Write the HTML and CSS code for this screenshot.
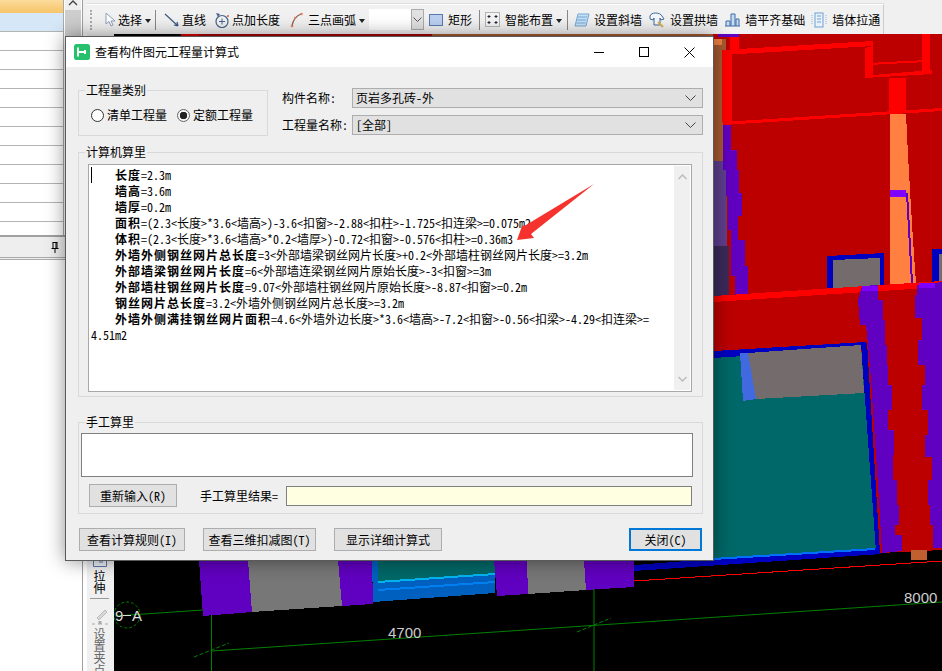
FILE: index.html
```html
<!DOCTYPE html>
<html lang="zh">
<head>
<meta charset="utf-8">
<title>查看构件图元工程量计算式</title>
<link rel="stylesheet" href="styles.css">
</head>
<body>
<div class="app">
  <aside class="left">
    <div class="left-top">
      <div class="table">
        <div class="thead"></div>
        <div class="row row-sel"></div>
        <div class="row"></div><div class="row"></div><div class="row"></div><div class="row"></div>
        <div class="row"></div><div class="row"></div><div class="row"></div><div class="row"></div>
        <div class="row"></div><div class="row"></div>
      </div>
      <div class="vscroll"><svg class="vscroll-up" width="10" height="6" viewBox="0 0 10 6"><path d="M1 5l4-4 4 4" fill="none" stroke="#444" stroke-width="1.4"/></svg><div class="vscroll-thumb"></div></div>
    </div>
    <div class="panel-band">
      <svg class="pin" width="8" height="11" viewBox="0 0 8 11"><path d="M1.500.5h5M2 .5v6h4v-6M.5 6.500h7M4 6.500V11M5 1v5" fill="none" stroke="#000"/></svg>
    </div>
  </aside>

  <div class="main">
    <header class="topbar">
      <div class="toolbar">
        <span class="grip"></span>
        <svg class="ic ic-cur" width="12" height="16" viewBox="0 0 12 16"><path d="M2 1v11l3-2.500 2 4.500 2-1-2-4h4z" fill="#fff" stroke="#8fa0b8"/></svg>
        <span class="tb-text">选择</span><i class="caret"></i><span class="sep"></span>
        <svg class="ic ic-line" width="16" height="16" viewBox="0 0 16 16"><path d="M1 2l13 12M14 14l-1-4M14 14l-4-1" fill="none" stroke="#3c5a82" stroke-width="1.200"/></svg>
        <span class="tb-text">直线</span>
        <svg class="ic ic-line" width="16" height="16" viewBox="0 0 16 16"><circle cx="8" cy="9.500" r="6" fill="none" stroke="#47648c" stroke-width="1.200"/><path d="M5 9.500h6M8 6.500v6" stroke="#47648c"/><path d="M2 1l4 1-2 3z" fill="#47648c"/><circle cx="14" cy="4" r="1" fill="#d06040"/></svg>
        <span class="tb-text">点加长度</span>
        <svg class="ic ic-arc" width="14" height="16" viewBox="0 0 14 16"><path d="M2 14C3 8 6 4 11 2" fill="none" stroke="#8a5a4a" stroke-width="1.300"/><circle cx="2" cy="14" r="1.300" fill="#e08060"/><circle cx="11.500" cy="2" r="1.300" fill="#e08060"/><circle cx="5" cy="6" r="1.200" fill="#e08060"/></svg>
        <span class="tb-text">三点画弧</span><i class="caret"></i>
        <span class="combo"><span class="combo-btn"><svg width="9" height="5" viewBox="0 0 9 5"><path d="M.5.500l4 4 4-4" fill="none" stroke="#555"/></svg></span></span>
        <svg class="ic ic-rect" width="14" height="12" viewBox="0 0 14 12"><rect x=".5" y=".5" width="13" height="11" fill="#bcd0f0" stroke="#5a7ab0"/></svg>
        <span class="tb-text">矩形</span><span class="sep sep-wide"></span>
        <svg class="ic ic-rect" width="15" height="15" viewBox="0 0 15 15"><rect x=".5" y=".5" width="14" height="14" fill="#f4f4f4" stroke="#777" stroke-dasharray="1 1"/><path d="M4 3v3M2.500 4.500h3M11 3v3M9.500 4.500h3M4 9v3M2.500 10.500h3M11 9v3M9.500 10.500h3" stroke="#223"/></svg>
        <span class="tb-text">智能布置</span><i class="caret"></i><span class="sep sep-mid"></span>
        <svg class="ic ic-slant" width="16" height="14" viewBox="0 0 16 14"><path d="M4 1h11l-3 12H1z" fill="#c8e0f4" stroke="#70a8d8"/><path d="M4 4h9M3 7h9M2.500 10h9" stroke="#70a8d8"/></svg>
        <span class="tb-text">设置斜墙</span>
        <svg class="ic ic-arch" width="16" height="17" viewBox="0 0 16 17"><path d="M1 5C2 1 11 1 13 5l2 3-3 1-1-2v7H5V7L4 9 1 8z" fill="#f4f8fc" stroke="#3a6a9a"/><path d="M9 11l5 5" stroke="#d8b050" stroke-width="2"/></svg>
        <span class="tb-text">设置拱墙</span>
        <svg class="ic ic-base" width="16" height="15" viewBox="0 0 16 15"><path d="M1 14h15M2 14V9h4v5M7 14V2h4v12M12 14V7h3v7" fill="#c8dcf0" stroke="#3a6aa8"/></svg>
        <span class="tb-text">墙平齐基础</span>
        <svg class="ic ic-pull" width="17" height="16" viewBox="0 0 17 16"><path d="M1 3v10M15 3v10" stroke="#8ab8e0" stroke-dasharray="1 1"/><rect x="4" y="1" width="8" height="14" fill="#e8f2fa" stroke="#70a0d0"/><path d="M6 4h4M6 7h4M6 10h4" stroke="#70a0d0"/></svg>
        <span class="tb-text">墙体拉通</span>
      </div>
    </header>

    <div class="work">
      <nav class="strip">
        <div class="strip-spacer"></div>
        <svg class="strip-ic" width="14" height="8" viewBox="0 0 14 8"><path d="M.5 0v7.500h13V0" fill="#eef2f8" stroke="#5a7ab0"/><path d="M7 1v3M9 2v2" stroke="#5a7ab0"/></svg>
        <span class="strip-text">拉伸</span>
        <span class="strip-sep"></span>
        <svg class="strip-ic" width="16" height="18" viewBox="0 0 16 18"><path d="M5 11l8-8 2 2-8 8z" fill="#d8d8d8" stroke="#bbb"/><path d="M0 17h3M6 17h4M13 17h3" stroke="#aaa"/><rect x="6.500" y="14" width="3" height="3" fill="#aaa"/></svg>
        <span class="strip-text strip-dim">设置夹点</span>
      </nav>
      <div class="canvas">
        <svg class="scene" width="828" height="637" viewBox="114 34 828 637" shape-rendering="crispEdges">
          <rect x="114" y="34" width="828" height="637" fill="#000"/>
          <rect x="181" y="34" width="18" height="3" fill="#e00000"/>
          <rect x="199" y="34" width="233" height="3" fill="#a80000"/>
          <rect x="432" y="34" width="290" height="3" fill="#a85a30"/>
          <polygon points="713,34 942,34 942,300 713,300" fill="#bc0000"/>
          <rect x="713" y="39" width="13" height="122" fill="#a85a30"/>
          <rect x="713" y="39" width="9" height="6" fill="#f08040"/>
          <rect x="718" y="34" width="21" height="3" fill="#6000c0"/>
          <rect x="713" y="161" width="14" height="85" fill="#5f3f8f"/>
          <rect x="713" y="246" width="16" height="52" fill="#3c2a5a"/>
          <polygon points="723,124 731,124 731,150 737,150 737,170 739,170 739,193 742,193 742,216 738,216 738,240 745,240 745,266 748,266 748,295 735,297 735,276 731,276 731,230 728,230 728,196 726,196 726,170 723,170" fill="#6000c0"/>
          <rect x="723" y="119" width="8" height="3" fill="#8000ff"/>
          <rect x="722" y="50" width="10" height="72" fill="#f00"/>
          <rect x="730" y="37" width="9" height="13" fill="#f00"/>
          <polygon points="722,50 873,41 873,46 722,55" fill="#f00"/>
          <polygon points="865,48 873,46 873,75 932,70 932,74 865,78" fill="#f00"/>
          <polygon points="868,63 927,60 927,62 868,65" fill="#f00"/>
          <rect x="922" y="34" width="8" height="40" fill="#f00"/>
          <polygon points="723,122 942,108 942,111 723,125" fill="#f00"/>
          <polygon points="889,78 906,78 906,113 889,113" fill="#f00"/>
          <polygon points="890,114 906,114 908,155 910,190 913,240 916,283 890,286" fill="#ff8040"/>
          <rect x="890" y="190" width="16" height="7" fill="#8000ff"/>
          <polygon points="906,193 908,193 913,283 911,283" fill="#6000c0"/>
          <polygon points="827,256 884,253 884,287 827,290" fill="#0000c0"/>
          <polygon points="833,260 880,258 880,288 833,290" fill="#746c6c"/>
          <polygon points="932,249 942,249 942,282 932,282" fill="#0000c0"/>
          <rect x="939" y="254" width="3" height="28" fill="#746c6c"/>
          <polygon points="713,302 942,286 942,360 713,360" fill="#bc0000"/>
          <polygon points="713,296 942,281 942,287 713,302" fill="#f00"/>
          <polygon points="713,354 861,345 876,549 713,560" fill="#006868"/>
          <polygon points="713,351 866,342 868,348 713,358" fill="#0000c0"/>
          <polygon points="861,343 867,343 882,549 876,552" fill="#0000c0"/>
          <polygon points="748,353 861,345 864,393 756,399" fill="#746c6c"/>
          <polygon points="740,353 748,353 756,399 743,401" fill="#4169e0"/>
          <polygon points="634,565 713,559 877,548 881,549 881,554 634,571" fill="#0000c0"/>
          <polygon points="713,558 875,548 875,550 713,560" fill="#0070ff"/>
          <polygon points="867,342 920,340 942,340 942,550 880,553" fill="#bc0000"/>
          <polygon points="858,300 862,286 878,285 878,300 883,300 883,320 885,320 885,345 887,345 887,365 888,365 888,385 892,385 892,410 888,410 888,430 894,430 894,455 893,455 893,480 897,480 897,505 899,505 899,525 895,525 895,535 902,535 902,551 882,553 879,500 875,440 871,380 868,345 866,325 860,325" fill="#6000c0"/>
          <rect x="862" y="286" width="16" height="5" fill="#8000ff"/>
          <polygon points="917,285 942,282 942,548 933,548 933,525 930,525 930,505 928,505 928,480 932,480 932,457 925,457 925,435 928,435 928,410 922,410 922,385 925,385 925,365 918,365 918,340 922,340 922,318 915,318 915,295 917,295" fill="#6000c0"/>
          <rect x="919" y="283" width="16" height="5" fill="#8000ff"/>
          <rect x="911" y="550" width="16" height="10" fill="#c06030"/>
          <polygon points="378,560 495,560 495,575 378,583" fill="#006868"/>
          <polygon points="372,560 378,560 378,582 495,574 495,593 373,602" fill="#0060c0"/>
          <polygon points="378,581 495,573 495,575 378,583" fill="#00b4f0"/>
          <polygon points="378,589 495,581 495,583 378,591" fill="#0080f0"/>
          <polygon points="199,560 248,560 252,612 203,616" fill="#6000c0"/>
          <polygon points="248,560 338,560 342,606 252,612" fill="#777"/>
          <polygon points="338,560 372,560 373,604 342,606" fill="#6000c0"/>
          <polygon points="494,560 527,560 528,594 497,596" fill="#6000c0"/>
          <polygon points="527,560 584,560 586,590 528,594" fill="#777"/>
          <polygon points="584,560 634,560 634,587 586,590" fill="#6000c0"/>
          <polygon points="634,571 634,565 640,566" fill="#0000c0"/>
          <line x1="634" y1="581" x2="942" y2="561" stroke="#f00"/>
          <g shape-rendering="auto" stroke="#008000" fill="none">
            <line x1="212" y1="651" x2="942" y2="602"/>
            <line x1="115" y1="616" x2="203" y2="610"/>
            <line x1="211.500" y1="615" x2="211.500" y2="671"/>
            <line x1="594" y1="589" x2="594" y2="671"/>
            <line x1="194" y1="657" x2="229" y2="643" stroke-dasharray="4 2"/>
            <line x1="577" y1="632" x2="611" y2="618" stroke-dasharray="4 2"/>
            <circle cx="127" cy="615" r="13" stroke-dasharray="3 2"/>
          </g>
          <text class="cad-text" x="115" y="621">9</text>
          <line x1="123" y1="615" x2="131" y2="615" stroke="#ddd"/>
          <text class="cad-text" x="132" y="621">A</text>
          <text class="cad-dim" x="388" y="638">4700</text>
          <text class="cad-dim" x="904" y="603">8000</text>
        </svg>
      </div>
    </div>
  </div>

  <section class="dialog">
    <div class="titlebar">
      <svg class="app-ic" width="16" height="16" viewBox="0 0 16 16"><rect width="16" height="16" rx="2.500" fill="#27c06c"/><path d="M4 3.500v9M4 8h8M11 6v4" fill="none" stroke="#fff" stroke-width="1.800"/></svg>
      <span class="title">查看构件图元工程量计算式</span>
      <div class="win-btns">
        <svg width="10" height="10" viewBox="0 0 10 10"><path d="M0 5.500h10" stroke="#000"/></svg>
        <svg width="10" height="10" viewBox="0 0 10 10"><rect x=".5" y=".5" width="9" height="9" fill="none" stroke="#000"/></svg>
        <svg width="11" height="11" viewBox="0 0 11 11"><path d="M.5.500l10 10M10.500.500l-10 10" stroke="#000"/></svg>
      </div>
    </div>
    <div class="dlg-body">
      <div class="top-row">
        <fieldset class="group group-type">
          <legend>工程量类别</legend>
          <label class="radio"><i class="radio-dot"></i>清单工程量</label>
          <label class="radio radio-on"><i class="radio-dot"></i>定额工程量</label>
        </fieldset>
        <div class="fields">
          <div class="field"><span class="field-label">构件名称:</span><div class="select">页岩多孔砖-外<svg class="chev" width="11" height="6" viewBox="0 0 11 6"><path d="M.5.500l5 5 5-5" fill="none" stroke="#444"/></svg></div></div>
          <div class="field"><span class="field-label">工程量名称:</span><div class="select">[全部]<svg class="chev" width="11" height="6" viewBox="0 0 11 6"><path d="M.5.500l5 5 5-5" fill="none" stroke="#444"/></svg></div></div>
        </div>
      </div>

      <fieldset class="group group-calc">
        <legend>计算机算里</legend>
        <div class="calc-box">
          <div class="calc-text">
            <i class="text-caret"></i>
            <p class="ln"><b>长度</b>=2.3m</p>
            <p class="ln"><b>墙高</b>=3.6m</p>
            <p class="ln"><b>墙厚</b>=0.2m</p>
            <p class="ln"><b>面积</b>=(2.3&lt;长度&gt;*3.6&lt;墙高&gt;)-3.6&lt;扣窗&gt;-2.88&lt;扣柱&gt;-1.725&lt;扣连梁&gt;=0.075m2</p>
            <p class="ln"><b>体积</b>=(2.3&lt;长度&gt;*3.6&lt;墙高&gt;*0.2&lt;墙厚&gt;)-0.72&lt;扣窗&gt;-0.576&lt;扣柱&gt;=0.36m3</p>
            <p class="ln"><b>外墙外侧钢丝网片总长度</b>=3&lt;外部墙梁钢丝网片长度&gt;+0.2&lt;外部墙柱钢丝网片长度&gt;=3.2m</p>
            <p class="ln"><b>外部墙梁钢丝网片长度</b>=6&lt;外部墙连梁钢丝网片原始长度&gt;-3&lt;扣窗&gt;=3m</p>
            <p class="ln"><b>外部墙柱钢丝网片长度</b>=9.07&lt;外部墙柱钢丝网片原始长度&gt;-8.87&lt;扣窗&gt;=0.2m</p>
            <p class="ln"><b>钢丝网片总长度</b>=3.2&lt;外墙外侧钢丝网片总长度&gt;=3.2m</p>
            <p class="ln"><b>外墙外侧满挂钢丝网片面积</b>=4.6&lt;外墙外边长度&gt;*3.6&lt;墙高&gt;-7.2&lt;扣窗&gt;-0.56&lt;扣梁&gt;-4.29&lt;扣连梁&gt;=<br>4.51m2</p>
          </div>
          <div class="calc-scroll">
            <svg width="9" height="6" viewBox="0 0 9 6"><path d="M.5 5l4-4 4 4" fill="none" stroke="#bbb" stroke-width="1.400"/></svg>
            <svg width="9" height="6" viewBox="0 0 9 6"><path d="M.5 1l4 4 4-4" fill="none" stroke="#bbb" stroke-width="1.400"/></svg>
          </div>
        </div>
      </fieldset>

      <fieldset class="group group-manual">
        <legend>手工算里</legend>
        <div class="manual-area"></div>
        <div class="manual-row">
          <button class="btn btn-reset" type="button">重新输入(R)</button>
          <span class="manual-label">手工算里结果=</span>
          <div class="manual-result"></div>
        </div>
      </fieldset>

      <div class="actions">
        <button class="btn btn-rule" type="button">查看计算规则(I)</button>
        <button class="btn btn-3d" type="button">查看三维扣减图(T)</button>
        <button class="btn btn-detail" type="button">显示详细计算式</button>
        <button class="btn btn-close" type="button">关闭(C)</button>
      </div>
    </div>
    <svg class="arrow" width="80" height="60" viewBox="0 0 80 60"><polygon points="78,1 10,42 6,43 1,57 18,55 15,51" fill="#f5322d"/></svg>
  </section>
</div>
</body>
</html>
```
FILE: styles.css
```css
* { box-sizing: border-box; }
html, body { margin: 0; height: 100%; overflow: hidden; background: #fff; }
body, button { font: 12px/16px "Noto Sans Mono CJK SC", "Noto Sans CJK SC", monospace; color: #000; }

.app { position: relative; display: flex; width: 942px; height: 671px; overflow: hidden; }

/* left docked panel */
.left { width: 83px; height: 671px; border-right: 1px solid #a0a0a0; background: #fff; flex: none; }
.left-top { display: flex; height: 235px; }
.table { width: 64px; height: 235px; border-right: 1px solid #aaa; overflow: hidden; }
.thead { height: 13px; background: linear-gradient(#fbdc9c, #f6c468); }
.row { height: 19px; border-bottom: 1px solid #b4b4b4; }
.row-sel { background: #d6e8f8; border-bottom-color: #b4b4b4; }
.vscroll { width: 16px; margin-left: 1px; background: #efefef; }
.vscroll-up { display: block; margin: 0 auto; }
.vscroll-thumb { height: 26px; margin-top: 4px; background: #cdcdcd; }
.panel-band { display: flex; align-items: center; justify-content: flex-end; height: 25px; padding-right: 23px; background: #eee; border-top: 2px solid #a0a0a0; border-bottom: 3px double #aaa; }
.pin { display: block; }

/* main */
.main { flex: 1; display: flex; flex-direction: column; min-width: 0; }
.topbar { height: 34px; padding: 4px 0 0 4px; background: #f0f0f0; }
.toolbar { display: flex; align-items: center; width: 797px; height: 30px; padding-left: 3px; background: #f1f1f1; border-top: 1px solid #fff; border-right: 1px solid #ccc; box-shadow: 0 -1px 0 #ddd; }
.grip { width: 2px; height: 20px; margin-right: 12px; border-left: 2px dotted #aaa; }
.ic { flex: none; }
.ic-cur { margin: 0 2px 0 0; }
.ic-line { margin: 0 2px 0 8px; }
.ic-arc { margin: 0 4px 0 10px; }
.ic-rect { margin: 0 5px; }
.ic-slant { margin: 0 4px 0 6px; }
.ic-arch { margin: 0 5px 0 7px; }
.ic-base { margin: 0 5px 0 6px; }
.ic-pull { margin: 0 4px 0 6px; }
.tb-text { white-space: nowrap; }
.caret { width: 0; height: 0; margin: 2px 2px 0 3px; border: 3px solid transparent; border-top: 4px solid #222; border-bottom: 0; }
.sep { width: 1px; height: 20px; margin-left: 2px; background: #888; }
.sep-mid { margin-left: 3px; }
.sep-wide { margin-left: 7px; }
.combo { display: flex; justify-content: flex-end; width: 55px; height: 21px; margin-left: 2px; background: #fff; }
.combo-btn { display: flex; align-items: center; justify-content: center; width: 13px; background: #e1e1e1; border: 1px solid #aaa; }

.work { flex: 1; display: flex; min-height: 0; }
.strip { display: flex; flex-direction: column; align-items: center; width: 27px; margin-left: 4px; padding-right: 2px; background: #f0f0f0; flex: none; overflow: hidden; }
.strip-spacer { height: 525px; flex: none; }
.strip-ic { flex: none; display: block; }
.strip-text { writing-mode: vertical-rl; text-orientation: upright; line-height: 13px; margin-top: 3px; flex: none; }
.strip-dim { color: #666; margin-top: 3px; }
.strip-sep { width: 19px; height: 1px; margin: 4px 0 8px; background: #999; flex: none; }
.canvas { flex: 1; min-width: 0; overflow: hidden; background: #000; }
.scene { display: block; }
.cad-text { font: 15px "Liberation Sans", sans-serif; fill: #ddd; }
.cad-dim { font: 15px "Liberation Sans", sans-serif; fill: #ccc; }

/* dialog */
.dialog { position: absolute; left: 65px; top: 36px; width: 649px; height: 525px; display: flex; flex-direction: column; background: #efefef; border: 1px solid #5a5a5a; box-shadow: 0 0 18px rgba(0, 0, 0, .45); }
.titlebar { display: flex; align-items: center; height: 30px; padding-left: 8px; background: #fff; flex: none; }
.app-ic { flex: none; }
.title { margin-left: 5px; }
.win-btns { display: flex; align-items: center; gap: 35px; margin-left: auto; margin-right: 18px; }
.win-btns svg { display: block; }
.dlg-body { flex: 1; padding: 0 10px 0 12px; }

.group { position: relative; margin: 0; padding: 0; border: 1px solid #d9d9d9; min-width: 0; }
.group legend { padding: 0 1px; margin-left: 6px; line-height: 14px; height: 14px; }

.top-row { display: flex; padding-top: 16px; }
.group-type { display: flex; width: 190px; height: 53px; }
.radio { display: flex; align-items: center; }
.radio-dot { width: 13px; height: 13px; margin-right: 3px; border: 1px solid #333; border-radius: 50%; background: #fff; }
.radio { position: absolute; top: 10px; left: 12px; }
.radio-on { left: 98px; }
.radio-on .radio-dot { background: radial-gradient(circle, #222 0 3.500px, #f4f4f4 4px); border-color: #666; }
.fields { display: flex; flex-direction: column; gap: 7px; margin-left: 14px; padding-top: 5px; }
.field { display: flex; align-items: center; }
.field-label { width: 70px; white-space: nowrap; }
.select { display: flex; align-items: center; justify-content: space-between; width: 351px; height: 20px; padding: 0 6px 0 3px; background: #e1e1e1; border: 1px solid #adadad; }
.chev { flex: none; }

.group-calc { height: 252px; margin-top: 9px; }
.calc-box { position: absolute; left: 9px; top: 5px; width: 604px; height: 228px; display: flex; background: #fff; border: 1px solid #a8a8a8; }
.calc-text { position: relative; flex: 1; padding: 2px 0 0 2px; }
.text-caret { position: absolute; left: 2px; top: 2px; width: 1px; height: 16px; background: #000; }
.ln { margin: 0; text-indent: 24px; white-space: nowrap; }
.ln b { letter-spacing: 1px; }
.calc-scroll { display: flex; flex-direction: column; justify-content: space-between; align-items: center; width: 16px; padding: 8px 0; background: #f0f0f0; flex: none; margin: 1px; }
.calc-scroll svg { display: block; }

.group-manual { height: 99px; margin-top: 18px; }
.manual-area { position: absolute; left: 2px; top: 4px; width: 612px; height: 44px; background: #fff; border: 1px solid #808080; }
.manual-row { position: absolute; left: 10px; top: 55px; display: flex; align-items: center; }
.btn { height: 23px; padding: 0; background: #e1e1e1; border: 1px solid #adadad; white-space: nowrap; }
.btn-reset { width: 88px; }
.manual-label { margin-left: 23px; width: 86px; white-space: nowrap; }
.manual-result { width: 406px; height: 20px; background: #ffffe1; border: 1px solid #808080; }

.actions { display: flex; margin-top: 14px; padding-left: 1px; }
.btn-rule { width: 106px; }
.btn-3d { width: 113px; margin-left: 18px; }
.btn-detail { width: 108px; margin-left: 18px; }
.btn-close { width: 73px; margin-left: auto; margin-right: 1px; border: 2px solid #0078d7; }

.arrow { position: absolute; left: 450px; top: 146px; }
```
